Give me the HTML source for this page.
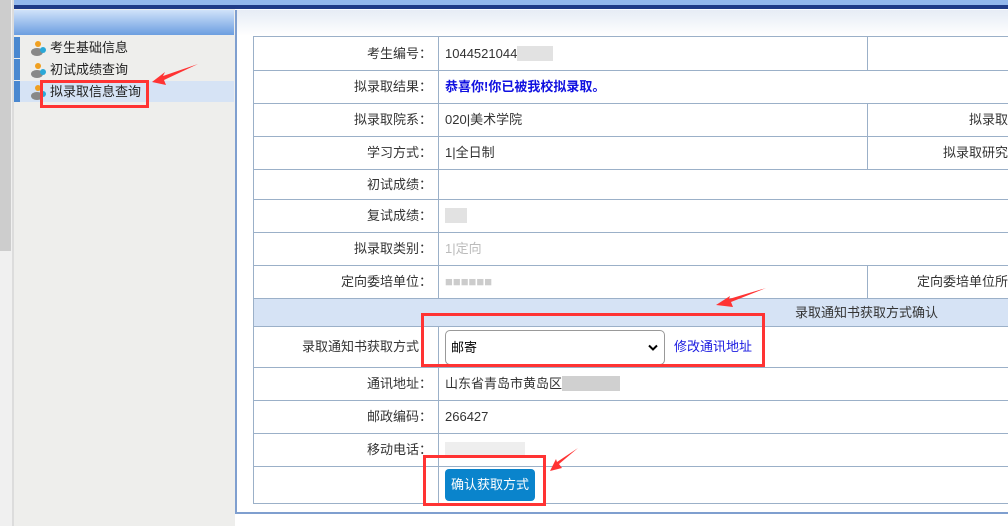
<!DOCTYPE html>
<html><head><meta charset="utf-8"><style>
*{margin:0;padding:0;box-sizing:border-box}
body{width:1008px;height:526px;overflow:hidden;background:#fff;font-family:"Liberation Sans","Noto Sans CJK SC",sans-serif;font-size:13px;color:#333;position:relative}
.abs{position:absolute}
.scroll{left:0;top:0;width:12px;height:526px;background:#f0f0f0}
.thumb{left:0;top:0;width:11px;height:251px;background:#cdcdcd}
.sep{left:12px;top:0;width:2px;height:526px;background:#dcdcdc}
.side{left:14px;top:0;width:221px;height:526px;background:#eeeeec}
.topl{left:14px;top:0;width:994px;height:5px;background:#93b8ec}
.topd{left:14px;top:5px;width:994px;height:4px;background:#1f3b87}
.sh{left:14px;top:10px;width:220px;height:25px;background:linear-gradient(#d0e2fa,#6c9ee0)}
.item{left:14px;width:220px;height:21px;border-left:6px solid #4a88d0;background:#eeeeec;padding-left:30px;line-height:21px;font-size:13px;color:#222}
.item svg{position:absolute;left:10px;top:3px}
.main{left:235px;top:10px;width:773px;height:504px;border-left:2px solid #7f9fcf;border-bottom:2px solid #7f9fcf;background:#fff}
.mh{left:237px;top:10px;width:771px;height:26px;background:linear-gradient(#e6ecf5,#fff)}
table{position:absolute;left:253px;top:36px;border-collapse:collapse;width:800px;table-layout:fixed}
td{border:1px solid #9bb0c8;padding:0 6px;font-size:13px;line-height:16px;white-space:nowrap;overflow:hidden}
td.l{text-align:right;color:#333}
td.r{text-align:right}
.red{position:absolute;border:3px solid #f33}
</style></head><body>
<div class="abs scroll"></div><div class="abs thumb"></div><div class="abs sep"></div>
<div class="abs side"></div>
<div class="abs topl"></div><div class="abs topd"></div>
<div class="abs sh"></div>
<div class="abs item" style="top:37px"><svg width="18" height="16"><circle cx="8" cy="4" r="3" fill="#f0a020"/><ellipse cx="7" cy="12" rx="6" ry="4" fill="#888"/><circle cx="13" cy="10" r="3" fill="#2aa8d8"/></svg>考生基础信息</div>
<div class="abs item" style="top:59px"><svg width="18" height="16"><circle cx="8" cy="4" r="3" fill="#f0a020"/><ellipse cx="7" cy="12" rx="6" ry="4" fill="#888"/><circle cx="13" cy="10" r="3" fill="#2aa8d8"/></svg>初试成绩查询</div>
<div class="abs item" style="top:81px;background:#d6e3f5"><svg width="18" height="16"><circle cx="8" cy="4" r="3" fill="#f0a020"/><ellipse cx="7" cy="12" rx="6" ry="4" fill="#888"/><circle cx="13" cy="10" r="3" fill="#2aa8d8"/></svg>拟录取信息查询</div>
<div class="abs main"></div><div class="abs mh"></div>
<table>
<colgroup><col style="width:185px"><col style="width:429px"><col style="width:186px"></colgroup>
<tr style="height:34px"><td class="l">考生编号：</td><td>1044521044<span style="background:#e2e2e2;color:#e2e2e2">00000</span></td><td></td></tr>
<tr style="height:33px"><td class="l">拟录取结果：</td><td colspan="2" style="color:#1010e0;font-weight:bold">恭喜你!你已被我校拟录取。</td></tr>
<tr style="height:33px"><td class="l">拟录取院系：</td><td>020|美术学院</td><td class="r">拟录取专业：</td></tr>
<tr style="height:33px"><td class="l">学习方式：</td><td>1|全日制</td><td class="r">拟录取研究方向：</td></tr>
<tr style="height:30px"><td class="l">初试成绩：</td><td colspan="2"></td></tr>
<tr style="height:33px"><td class="l">复试成绩：</td><td colspan="2"><span style="background:#e2e2e2;color:#e2e2e2">000</span></td></tr>
<tr style="height:33px"><td class="l">拟录取类别：</td><td colspan="2"><span style="color:#bbb">1|定向</span></td></tr>
<tr style="height:33px"><td class="l">定向委培单位：</td><td><span style="color:#ccc">■■■■■■</span></td><td class="r">定向委培单位所在地：</td></tr>
<tr style="height:28px;background:#d6e3f5"><td colspan="3" style="padding-left:541px">录取通知书获取方式确认</td></tr>
<tr style="height:41px"><td class="l">录取通知书获取方式：</td><td colspan="2"><span style="display:inline-block;vertical-align:middle;width:220px;height:35px;border:1px solid #999;border-radius:5px;line-height:33px;padding-left:5px;position:relative;color:#000">邮寄<svg style="position:absolute;right:6px;top:13px" width="10" height="8"><path d="M1 1.5 L5 5.5 L9 1.5" stroke="#000" stroke-width="2" fill="none"/></svg></span><span style="color:#1a1ae0;margin-left:9px;vertical-align:middle">修改通讯地址</span></td></tr>
<tr style="height:33px"><td class="l">通讯地址：</td><td colspan="2">山东省青岛市黄岛区<span style="background:#d0d0d0;color:#d0d0d0">00000000</span></td></tr>
<tr style="height:33px"><td class="l">邮政编码：</td><td colspan="2">266427</td></tr>
<tr style="height:33px"><td class="l">移动电话：</td><td colspan="2"><span style="background:#eee;color:#eee">00000000000</span></td></tr>
<tr style="height:37px"><td></td><td colspan="2"><span style="display:inline-block;background:#0a84cc;color:#fff;border-radius:4px;padding:8px 6px;font-size:13px">确认获取方式</span></td></tr>
</table>
<div class="red" style="left:40px;top:80px;width:109px;height:28px"></div>
<div class="red" style="left:421px;top:313px;width:344px;height:54px"></div>
<div class="red" style="left:423px;top:455px;width:123px;height:51px"></div>
<svg class="abs" style="left:0;top:0" width="1008" height="526">
<polygon points="152,82 165,72 163,76 198,64 164,80 166,85" fill="#f33"/>
<polygon points="716,305 730,296 729,299 766,288 731,302 733,307" fill="#f33"/>
<polygon points="550,471 556,459 557,462 578,448 559,464 562,468" fill="#f33"/>
</svg>
</body></html>
